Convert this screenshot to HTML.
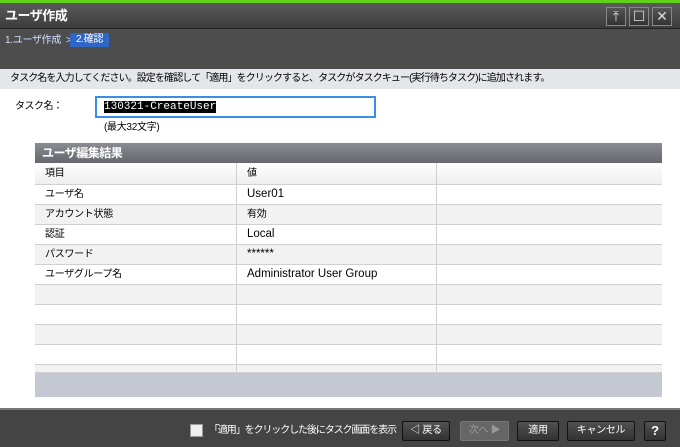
<!DOCTYPE html>
<html><head><meta charset="utf-8"><style>
*{margin:0;padding:0;box-sizing:border-box}
body{width:680px;height:447px;position:relative;overflow:hidden;background:#fff;font-family:"Liberation Sans","Noto Sans CJK JP",sans-serif;font-size:10px;color:#000;white-space:nowrap;line-height:12px}
.a{position:absolute}
.tb{left:0;top:0;width:680px;height:29px;background:linear-gradient(#5a5a5a,#3c3c3c);border-top:3px solid #5fd11a;border-bottom:1px solid #222}
.tb .t{left:5px;top:5px;color:#fff;font-weight:bold;font-size:13px;line-height:16px;letter-spacing:-0.5px}
.wb{top:4px;width:20px;height:19px;border:1px solid #888;background:linear-gradient(#555,#333);color:#ddd;font-size:14px;text-align:center;line-height:17px}
.bc{left:0;top:29px;width:680px;height:40px;background:#4d4d4d}
.inst{left:0;top:69px;width:680px;height:20px;background:#e4e6ea;padding:4px 10px;font-size:10px;letter-spacing:-0.9px}
.tbl{left:35px;top:143px;width:627px}
.hdr{height:20px;background:linear-gradient(#8a8c93,#65676e);color:#fff;font-weight:bold;font-size:12px;padding:0 7px;line-height:20px;letter-spacing:-0.5px}
.row{height:20px;border-bottom:1px solid #d0d0d0;display:flex;font-size:10px;line-height:19px}
.row div{border-right:1px solid #d0d0d0;padding:0 0 0 10px;letter-spacing:-0.3px}
.row .l{font-size:11.5px;letter-spacing:0}
.c1{width:202px}.c2{width:200px}.c3{flex:1;border-right:none!important}
.ft{left:0;top:408px;width:680px;height:39px;background:#444;border-top:2px solid #777}
.btn{top:11px;height:20px;border:1px solid #111;border-radius:2px;background:linear-gradient(#505050,#333);color:#fff;text-align:center;line-height:18px;font-size:10px;letter-spacing:-0.3px}
</style></head><body>
<div class="a tb"><div class="a t">ユーザ作成</div>
<div class="a wb" style="left:606px">&#x2912;</div><div class="a wb" style="left:629px">☐</div><div class="a wb" style="left:652px">✕</div></div>
<div class="a bc"><div class="a" style="left:5px;top:6px;color:#cfe0ff;letter-spacing:-0.3px">1.ユーザ作成 &nbsp;&gt;</div><div class="a" style="left:70px;top:4px;width:39px;height:14px;background:#2f66c8;color:#fff;padding:1px 0 0 6px;letter-spacing:-0.3px">2.確認</div></div>
<div class="a inst">タスク名を入力してください。設定を確認して「適用」をクリックすると、タスクがタスクキュー(実行待ちタスク)に追加されます。</div>
<div class="a" style="left:15px;top:101px;letter-spacing:-0.5px">タスク名：</div>
<div class="a" style="left:95px;top:96px;width:281px;height:22px;border:2px solid #3b8ee8;padding:3px 7px;font-family:'Liberation Mono',monospace;font-size:11px;line-height:13px"><span style="background:#000;color:#fff">130321-CreateUser</span></div>
<div class="a" style="left:104px;top:122px;letter-spacing:-0.3px">(最大32文字)</div>
<div class="a tbl">
<div class="hdr">ユーザ編集結果</div>
<div class="row" style="height:22px;line-height:21px;background:linear-gradient(#fff,#eee)"><div class="c1">項目</div><div class="c2">値</div><div class="c3"></div></div>
<div class="row"><div class="c1">ユーザ名</div><div class="c2 l">User01</div><div class="c3"></div></div>
<div class="row" style="background:#f2f2f2"><div class="c1">アカウント状態</div><div class="c2">有効</div><div class="c3"></div></div>
<div class="row"><div class="c1">認証</div><div class="c2 l">Local</div><div class="c3"></div></div>
<div class="row" style="background:#f2f2f2"><div class="c1">パスワード</div><div class="c2 l">******</div><div class="c3"></div></div>
<div class="row"><div class="c1">ユーザグループ名</div><div class="c2 l">Administrator User Group</div><div class="c3"></div></div>
<div class="row" style="background:#f2f2f2"><div class="c1"></div><div class="c2"></div><div class="c3"></div></div>
<div class="row"><div class="c1"></div><div class="c2"></div><div class="c3"></div></div>
<div class="row" style="background:#f2f2f2"><div class="c1"></div><div class="c2"></div><div class="c3"></div></div>
<div class="row"><div class="c1"></div><div class="c2"></div><div class="c3"></div></div>
<div class="row" style="height:8px;background:#f2f2f2"><div class="c1"></div><div class="c2"></div><div class="c3"></div></div>
<div style="height:24px;background:#c3c8d2"></div>
</div>
<div class="a ft">
<div class="a" style="left:190px;top:14px;width:13px;height:13px;background:#eee;border:1px solid #999"></div>
<div class="a" style="left:209px;top:15px;color:#fff;letter-spacing:-1.1px">「適用」をクリックした後にタスク画面を表示</div>
<div class="a btn" style="left:402px;width:48px">◁ 戻る</div>
<div class="a btn" style="left:460px;width:49px;background:#666;border-color:#777;color:#999">次へ ▶</div>
<div class="a btn" style="left:517px;width:42px">適用</div>
<div class="a btn" style="left:567px;width:68px">キャンセル</div>
<div class="a btn" style="left:644px;width:22px;font-weight:bold;font-size:13px">?</div>
</div>
</body></html>
